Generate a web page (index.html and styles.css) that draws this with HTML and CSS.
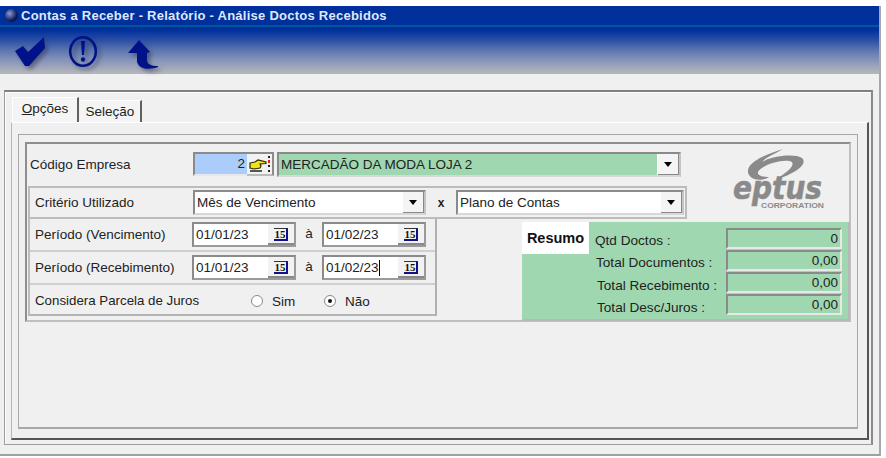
FILE: index.html
```html
<!DOCTYPE html>
<html lang="pt">
<head>
<meta charset="utf-8">
<title>Contas a Receber</title>
<link rel="stylesheet" href="styles.css">
</head>
<body>
<div class="window">
  <header class="header">
    <div class="titlebar">
      <span class="orb"></span>
      <span class="title">Contas a Receber - Relatório - Análise Doctos Recebidos</span>
    </div>
    <div class="toolbar">
      <svg class="tool tool-check" width="32" height="34" viewBox="0 0 32 34"><path d="M0 15 L8 10 L13 16 L29 1 L30 12 L14 30 L10 30 Z" fill="#00128a"/></svg>
      <svg class="tool tool-warn" width="30" height="34" viewBox="0 0 30 34"><ellipse cx="14" cy="15.500" rx="12.800" ry="14.300" fill="none" stroke="#00128a" stroke-width="2.600"/><path d="M12 5 L16 5 L15 19 L13 19 Z" fill="#00128a"/><circle cx="14" cy="23.500" r="2.200" fill="#00128a"/></svg>
      <svg class="tool tool-back" width="34" height="34" viewBox="0 0 34 34"><path d="M11 0 L22 12 L19 13 L19 20 C19 24 23 26 30 26 L30 27 C24 29 12 31 9 22 L9 13 L0 13 Z" fill="#00128a"/></svg>
    </div>
  </header>
  <main class="body">
    <div class="outer">
      <div class="tabs">
        <span class="tab tab-active"><u>O</u>pções</span>
        <span class="tab tab-other">Seleção</span>
      </div>
      <div class="page">
        <div class="inner">
          <section class="group">
            <div class="upper">
              <div class="upper-rows">
                <div class="row row-empresa">
                  <span class="label label-empresa">Código Empresa</span>
                  <span class="code">2</span>
                  <span class="lookup">
                    <svg width="22" height="18" viewBox="0 0 22 18"><path d="M1 8 L6 7 L9 5 L17 7 L17 8.500 L11 9 L12 11 L11 13 L5 14 L1 13 Z" fill="#f2e21c" stroke="#2a2a00" stroke-width="1.200"/><path d="M1 16 L13 16" stroke="#222" stroke-width="1.500"/><path d="M20 1 L20 3 M20 10 L20 12 M20 15 L20 17" stroke="#222" stroke-width="2"/><path d="M20 5 L20 8" stroke="#e02020" stroke-width="2"/></svg>
                  </span>
                  <div class="select select-green">
                    <span class="select-text">MERCADÃO DA MODA LOJA 2</span>
                    <span class="arrow"></span>
                  </div>
                </div>
                <div class="row row-criterio">
                  <span class="label">Critério Utilizado</span>
                  <div class="select select-crit">
                    <span class="select-text">Mês de Vencimento</span>
                    <span class="arrow"></span>
                  </div>
                  <span class="times">x</span>
                  <div class="select select-plano">
                    <span class="select-text">Plano de Contas</span>
                    <span class="arrow"></span>
                  </div>
                </div>
              </div>
              <svg class="logo" width="96" height="66" viewBox="0 0 96 66">
                <path d="M16 27 C11 18 24 9 50 1 C42 6 33 9 29 14 C38 8 62 5 69 10 C75 16 64 25 42 32 C52 25 62 19 59 14 C52 10 28 17 25 24 C24 28 30 29 36 29 C30 33 20 33 16 27 Z" fill="#8a8a8a"/>
                <text class="logo-word" x="0" y="51" textLength="89" lengthAdjust="spacingAndGlyphs">eptus</text>
                <text class="logo-sub" x="28" y="60" textLength="63" lengthAdjust="spacingAndGlyphs">CORPORATION</text>
              </svg>
            </div>
            <div class="lower">
              <div class="lower-rows">
                <div class="row row-date">
                  <span class="label label-date">Período (Vencimento)</span>
                  <div class="date"><span class="date-text">01/01/23</span><span class="cal"><span class="cal-num">15</span></span></div>
                  <span class="a">à</span>
                  <div class="date"><span class="date-text">01/02/23</span><span class="cal"><span class="cal-num">15</span></span></div>
                </div>
                <div class="row row-date">
                  <span class="label label-date">Período (Recebimento)</span>
                  <div class="date"><span class="date-text">01/01/23</span><span class="cal"><span class="cal-num">15</span></span></div>
                  <span class="a">à</span>
                  <div class="date"><span class="date-text caret">01/02/23</span><span class="cal"><span class="cal-num">15</span></span></div>
                </div>
                <div class="row row-juros">
                  <span class="label label-juros">Considera Parcela de Juros</span>
                  <span class="radio"></span><span class="radio-label radio-label-sim">Sim</span>
                  <span class="radio radio-on"></span><span class="radio-label">Não</span>
                </div>
              </div>
              <div class="resumo">
                <div class="resumo-tab">Resumo</div>
                <div class="resumo-panel">
                  <div class="stat"><span class="stat-label s0">Qtd Doctos :</span><span class="stat-value">0</span></div>
                  <div class="stat"><span class="stat-label s1">Total Documentos :</span><span class="stat-value">0,00</span></div>
                  <div class="stat"><span class="stat-label s2">Total Recebimento :</span><span class="stat-value">0,00</span></div>
                  <div class="stat"><span class="stat-label s3">Total Desc/Juros :</span><span class="stat-value">0,00</span></div>
                </div>
              </div>
            </div>
          </section>
        </div>
      </div>
    </div>
  </main>
</div>
</body>
</html>
```
FILE: styles.css
```css
* { box-sizing: border-box; }
html, body { margin: 0; padding: 0; background: #fff; }
body { padding-top: 6px; width: 886px; height: 458px; overflow: hidden; font-family: "Liberation Sans", sans-serif; font-size: 13.5px; color: #222; }
.window { width: 881px; height: 450px; background: #f0f0f0; border-right: 2px solid #a8a8a8; border-bottom: 2px solid #a0a0a0; display: flex; flex-direction: column; }
.header { height: 68px; background: linear-gradient(#00309c 0, #00309c 24px, #2a4ea6 34px, #5b75ae 44px, #8593ba 54px, #b4b6bc 67px); }
.titlebar { height: 21px; border-bottom: 2px solid #00569c; display: flex; align-items: center; padding-left: 5px; gap: 3px; }
.orb { width: 13px; height: 13px; border-radius: 50%; background: radial-gradient(circle at 35% 35%, #8a9ad8, #101a5a 60%, #050a30); }
.title { color: #dfe8ff; font-weight: bold; font-size: 13px; letter-spacing: .25px; }
.toolbar { display: flex; align-items: flex-start; height: 45px; padding-left: 15px; }
.tool { filter: drop-shadow(3px 3px 2px rgba(50, 55, 80, .55)); }
.tool-check { margin-top: 9px; }
.tool-warn { margin-top: 9px; margin-left: 22px; }
.tool-back { margin-top: 13px; margin-left: 29px; }
.body { padding: 16px 0 0 4px; flex: 1; }
.outer { width: 869px; height: 355px; border: 1px solid #9c9c9c; border-top: 2px solid #808080; border-right: 2px solid #8a8a8a; box-shadow: inset 1px 1px 0 #fff; padding: 5px 3px 0 6px; display: flex; flex-direction: column; }
.tabs { height: 25px; display: flex; align-items: flex-end; padding-left: 2px; gap: 1px; }
.tab { display: flex; align-items: center; justify-content: center; background: #f4f4f4; border-top: 1px solid #fff; border-right: 2px solid #606060; font-size: 13.5px; }
.tab-active { width: 66px; height: 25px; padding-bottom: 4px; box-shadow: -1px 0 0 #fff; }
.tab-other { width: 62px; height: 22px; padding-bottom: 1px; }
.page { width: 858px; height: 318px; border: 1px solid #b8b8b8; border-right: 2px solid #555; border-bottom: 2px solid #555; border-top-color: #fff; padding: 11px 9px 0 6px; }
.inner { width: 840px; height: 295px; border: 1px solid #a8a8a8; border-bottom: 2px solid #a8a8a8; padding: 7px 6px 0 6px; }
.group { width: 826px; height: 180px; border: 2px solid #8e8e8e; border-right-color: #c0c0c0; border-bottom-color: #c0c0c0; padding: 6px 0 0 1px; display: flex; flex-direction: column; }
.upper { display: flex; height: 69px; }
.upper-rows { width: 659px; display: flex; flex-direction: column; }
.logo { margin: -2px 0 0 46px; flex: none; overflow: visible; }
.logo-word { font-family: "DejaVu Sans", sans-serif; font-weight: bold; font-style: italic; font-size: 32px; fill: #8a8a8a; stroke: #8a8a8a; stroke-width: .6px; }
.logo-sub { font-family: "Liberation Sans", sans-serif; font-weight: bold; font-size: 6.500px; fill: #8a8a8a; }
.row { display: flex; align-items: center; }
.label { white-space: nowrap; }
.row-empresa { height: 36px; padding: 0 0 8px 2px; }
.label-empresa { width: 163px; }
.code { width: 54px; height: 24px; background: #abcdfb; border: 2px solid #8a8a8a; border-right: 0; border-bottom-color: #e8e8e8; text-align: right; padding-right: 2px; line-height: 20px; }
.lookup { width: 27px; height: 24px; background: #f2f2f2; border: 2px solid #8a8a8a; border-left: 0; border-bottom-color: #bbb; display: flex; align-items: center; justify-content: center; }
.select { display: flex; align-items: center; justify-content: space-between; height: 25px; border: 2px solid #8a8a8a; border-bottom-color: #d8d8d8; border-right-color: #c4c4c4; flex: none; }
.select-green { width: 404px; margin-left: 3px; background: #9fd8b0; }
.select-crit { width: 233px; background: #fff; }
.select-plano { width: 228px; background: #fff; }
.select-text { padding-left: 2px; }
.arrow { width: 22px; height: 21px; background: #f4f4f4; border-left: 1px solid #fff; box-shadow: inset -1px -1px 0 #888; position: relative; flex: none; }
.arrow::after { content: ""; position: absolute; left: 6px; top: 8px; border: 4.500px solid transparent; border-top: 5px solid #000; border-bottom: 0; }
.row-criterio { height: 33px; border: 2px solid #bcbcbc; width: 659px; padding-left: 5px; }
.row-criterio .label { width: 158px; }
.times { width: 30px; text-align: center; font-weight: bold; font-size: 12px; }
.lower { display: flex; justify-content: space-between; flex: 1; }
.lower-rows { width: 409px; display: flex; flex-direction: column; border: 2px solid #bcbcbc; border-top: 0; border-bottom: 2px solid #b4b4b4; border-right-color: #b0b0b0; height: 97px; }
.row-date { height: 33px; border-bottom: 2px solid #cfcfcf; padding-left: 5px; }
.label-date { width: 157px; }
.row-juros { height: 29px; padding: 2px 0 0 5px; }
.label-juros { width: 216px; font-size: 13.3px; }
.date { width: 104px; height: 25px; background: #fff; border: 2px solid #8a8a8a; border-right-color: #9a9a9a; border-bottom-color: #9a9a9a; display: flex; align-items: center; justify-content: space-between; }
.a { width: 26px; text-align: center; padding-bottom: 2px; }
.date-text { padding-left: 2px; font-size: 13.5px; }
.caret { border-right: 1px solid #000; line-height: 16px; margin-right: auto; }
.cal { width: 26px; height: 21px; background: #f2f2f2; box-shadow: inset 0 -2px 0 #888; display: flex; align-items: center; justify-content: center; flex: none; }
.cal-num { width: 14px; height: 13px; border: 1px solid #333; border-width: 1px 2px 2px 0; border-right-color: #10108a; border-bottom-color: #10108a; font-family: "Liberation Serif", serif; font-weight: bold; font-size: 11px; line-height: 11px; color: #111; text-align: center; }
.radio { width: 12px; height: 12px; border-radius: 50%; background: #fff; border: 1px solid #888; position: relative; }
.radio-on::after { content: ""; position: absolute; left: 3px; top: 3px; width: 4px; height: 4px; border-radius: 50%; background: #111; }
.radio-label { margin-left: 9px; padding-top: 2px; }
.radio-label-sim { width: 52px; }
.resumo { width: 328px; height: 99px; margin-top: 3px; display: flex; position: relative; background: #9fd8b0; border-right: 2px solid #b8b8b8; border-bottom: 2px solid #b8b8b8; margin-right: -1px; }
.resumo-tab { position: absolute; left: 0; top: 0; width: 67px; height: 32px; background: #fff; font-weight: bold; font-size: 14.5px; color: #111; text-align: center; line-height: 33px; }
.resumo-panel { margin-left: 67px; flex: 1; padding: 6px 6px 0 6px; display: flex; flex-direction: column; gap: 1px; }
.stat { display: flex; justify-content: space-between; align-items: center; height: 21px; }
.stat-label { white-space: nowrap; font-size: 13.6px; }
.s0 { padding-top: 3px; }
.s1 { padding-left: 1px; padding-top: 3px; }
.s2 { padding-left: 2px; padding-top: 6px; }
.s3 { padding-left: 2px; padding-top: 5px; }
.stat-value { width: 116px; height: 21px; flex: none; border: 2px solid #8a8a8a; border-right-color: #e8e8e8; border-bottom-color: #e8e8e8; text-align: right; padding-right: 2px; line-height: 17px; }
```
